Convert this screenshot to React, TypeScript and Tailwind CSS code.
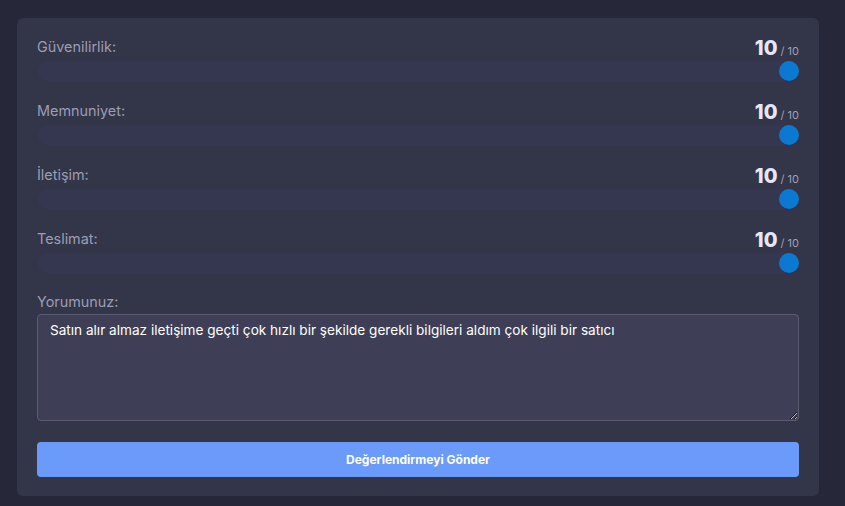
import React from "react";

const criteria = [
  { id: "guven", label: "Güvenilirlik:", value: 10 },
  { id: "memnun", label: "Memnuniyet:", value: 10 },
  { id: "iletisim", label: "İletişim:", value: 10 },
  { id: "teslimat", label: "Teslimat:", value: 10 },
];

const ScoreSlider: React.FC<{ label: string; value: number; max?: number }> = ({
  label,
  value,
  max = 10,
}) => {
  const pct = (value / max) * 100;
  return (
    <div className="mb-[19px]">
      <div className="flex h-6 items-end justify-between">
        <span className="pb-[3px] text-[14.4px] leading-5 text-[#9c9db3]">{label}</span>
        <span className="flex items-baseline gap-[3px]">
          <span className="text-[20px] font-extrabold leading-6 text-[#e6e6fa]">{value}</span>
          <span className="text-[11px] text-[#a0a1b8]">/ {max}</span>
        </span>
      </div>
      <div className="mt-[1px] h-5 w-full rounded-full bg-[#35364f]">
        <div className="flex h-5 items-center justify-end" style={{ width: `${pct}%` }}>
          <div className="h-5 w-5 rounded-full bg-[#0b79d0]" />
        </div>
      </div>
    </div>
  );
};

export default function App() {
  const [comment, setComment] = React.useState(
    "Satın alır almaz iletişime geçti çok hızlı bir şekilde gerekli bilgileri aldım çok ilgili bir satıcı"
  );

  return (
    <div
      className="min-h-[506px] bg-[#262839] pl-[17px] pt-[18px]"
      style={{ fontFamily: "Inter, 'Open Sans', sans-serif" }}
    >
      <div className="w-[802px] rounded-md bg-[#333548] px-5 pb-[19px] pt-[18px]">
        {criteria.map((c) => (
          <ScoreSlider key={c.id} label={c.label} value={c.value} />
        ))}

        <label className="block text-[14.4px] leading-5 text-[#9c9db3]">Yorumunuz:</label>
        <textarea
          value={comment}
          onChange={(e) => setComment(e.target.value)}
          className="mt-[2px] block h-[107px] w-full rounded border border-[#5a5b70] bg-[#3e3f56] px-3 py-[5px] text-[13.6px] leading-5 text-white outline-none"
        />

        <button className="mt-[21px] h-[35px] w-full rounded bg-[#6a9bfa] text-[12px] font-bold text-white">
          Değerlendirmeyi Gönder
        </button>
      </div>
    </div>
  );
}
